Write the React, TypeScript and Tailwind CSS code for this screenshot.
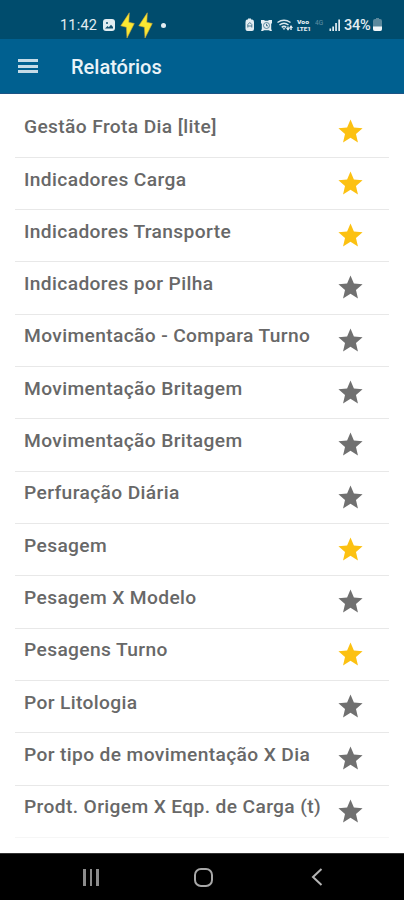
interface Report {
  label: string;
  favorite: boolean;
}

const Reports: Report[] = [
  { label: "Gestão Frota Dia [lite]", favorite: true },
  { label: "Indicadores Carga", favorite: true },
  { label: "Indicadores Transporte", favorite: true },
  { label: "Indicadores por Pilha", favorite: false },
  { label: "Movimentacão - Compara Turno", favorite: false },
  { label: "Movimentação Britagem", favorite: false },
  { label: "Movimentação Britagem", favorite: false },
  { label: "Perfuração Diária", favorite: false },
  { label: "Pesagem", favorite: true },
  { label: "Pesagem X Modelo", favorite: false },
  { label: "Pesagens Turno", favorite: true },
  { label: "Por Litologia", favorite: false },
  { label: "Por tipo de movimentação X Dia", favorite: false },
  { label: "Prodt. Origem X Eqp. de Carga (t)", favorite: false },
];

function Bolt() {
  return (
    <svg width="15" height="27" viewBox="0 0 15 27" className="shrink-0">
      <path d="M9.300.8.8 13.800l5.600 1.400L7 26l7.300-14.500-5.500-1.200z" fill="#fbe832" stroke="#c9a63a" strokeWidth=".6" />
    </svg>
  );
}

function StatusIcons() {
  return (
    <svg width="96" height="14" viewBox="0 0 96 14" fill="#e3edf2">
      {/* battery saver */}
      <path d="M3 .5h3v1h1.200Q9 1.500 9 4v7q0 2-2 2H2.500Q.5 13 .5 11V4Q.5 1.500 2 1.500h1z" />
      <path d="M2.800 9.500V6.500l2-2 2 2v3M3 8h3.600" fill="none" stroke="#3d7189" strokeWidth=".9" />
      {/* alarm */}
      <path d="M16 2h3l1 .8h3L24 2h3v3l-.8 1v5l.8 2h-2l-1-.8h-5l-1 .8h-2l.8-2V6L16 5z" />
      <circle cx="21.500" cy="7.500" r="3" fill="none" stroke="#3d7189" strokeWidth=".8" />
      <path d="M21.500 5.800v2h1.500" fill="none" stroke="#155270" strokeWidth=".8" />
      {/* wifi */}
      <g fill="none" stroke="#dbe8ee" strokeWidth="1.500">
        <path d="M32.500 4.500q6.500-4.500 13 0M34.500 7q4.500-3.500 9 0M36.700 9.400q2.300-2 4.600 0" />
        <path d="M43 11.500V8.500M46 8.500v3.500" />
      </g>
      <path d="m41 10 2 2.800 2-2.800zM44 10l2-3 2 3zM37.500 10.200h3L39 12z" />
      <text x="52" y="6.200" fontSize="5.500" fontWeight="900" fontFamily="Roboto, sans-serif" textLength="12" lengthAdjust="spacingAndGlyphs">Voo</text>
      <text x="52" y="13" fontSize="5.500" fontWeight="900" fontFamily="Roboto, sans-serif" textLength="14" lengthAdjust="spacingAndGlyphs">LTE1</text>
      <text x="70" y="6.800" fontSize="6.500" opacity=".4" fontFamily="Roboto, sans-serif">4G</text>
      <path d="M84.500 10.500h1.600V13h-1.600zM87.300 8.500h1.700V13h-1.700zM90.200 5h1.700v8h-1.700zM93.300 1.500H95V13h-1.700z" />
    </svg>
  );
}

function StatusBar() {
  return (
    <div className="flex h-[39px] items-start bg-[#004c6d] pl-[60px] text-[14.500px] text-[#e3edf2]">
      <span className="mt-[16px] w-[43px] leading-5 tracking-[0.200px]">11:42</span>
      <svg width="12" height="12" viewBox="0 0 12 12" className="mt-[19px]">
        <rect width="12" height="12" rx="3" fill="#e3edf2" />
        <path d="M2 9.500 4.500 7l1.300 1.200L8 5.700l2 2.300v1.500z" fill="#155270" />
        <circle cx="4" cy="4" r="1" fill="#155270" />
      </svg>
      <div className="mt-[12px] ml-[5px] flex gap-[3px]">
        <Bolt />
        <Bolt />
      </div>
      <span className="mt-[23px] ml-[8px] size-[5px] rounded-full bg-[#e3edf2]" />
      <div className="mt-[18px] ml-[79px]">
        <StatusIcons />
      </div>
      <span className="mt-[16px] ml-[3px] w-[28px] leading-5 font-medium tracking-[-0.200px]">34%</span>
      <svg width="9" height="14" viewBox="0 0 9 14" className="mt-[18px] ml-px">
        <path d="M3 0h3v1h1q2 0 2 2v8q0 2-2 2H2q-2 0-2-2V3q0-2 2-2h1z" fill="#5c899d" />
        <path d="M0 8.500h9V11q0 2-2 2H2q-2 0-2-2z" fill="#f2f7f9" />
      </svg>
    </div>
  );
}

function AppBar() {
  return (
    <header className="flex h-[55px] items-center border-b border-[#1c5485] bg-[#006090] pl-[18px]">
      <div className="flex w-[53px] flex-col gap-[2.500px]">
        <span className="h-[3px] w-5 bg-[#c5dbe7]" />
        <span className="h-[3px] w-5 bg-[#c5dbe7]" />
        <span className="h-[3px] w-5 bg-[#c5dbe7]" />
      </div>
      <h1 className="pt-px text-[20px] font-medium text-[#eaf3f8]">Relatórios</h1>
    </header>
  );
}

function ReportRow({ label, favorite }: Report) {
  return (
    <li className="flex h-[52.320px] items-start justify-between border-b border-[#e8e8e8] pr-[24.500px] pl-[9px] last:border-[#f6f6f6]">
      <span className="mt-[7.700px] text-[19.200px] leading-7 font-medium tracking-[0.370px] whitespace-nowrap text-[#686868]">{label}</span>
      <svg width="29" height="29" viewBox="0 0 24 24" className={favorite ? "mt-[11px] shrink-0 fill-[#fcc112]" : "mt-[11px] shrink-0 fill-[#707070]"}>
        <path d="M12 17.270 18.180 21l-1.640-7.030L22 9.240l-7.190-.61L12 2 9.190 8.630 2 9.240l5.460 4.730L5.820 21z" />
      </svg>
    </li>
  );
}

function NavBar() {
  return (
    <nav className="flex h-[47px] items-center border-t border-[#333] bg-black">
      <div className="ml-[83px] flex gap-1">
        <span className="h-[17px] w-[2.500px] bg-[#8c8c8c]" />
        <span className="h-[17px] w-[2.500px] bg-[#8c8c8c]" />
        <span className="h-[17px] w-[2.500px] bg-[#8c8c8c]" />
      </div>
      <span className="ml-[95.500px] size-[19px] rounded-[7px] border-2 border-[#a8a8a8]" />
      <svg width="12" height="18" viewBox="0 0 12 18" className="ml-[98px]">
        <path d="M10.500 1 2 9l8.500 8" fill="none" stroke="#b4b4b4" strokeWidth="2" />
      </svg>
    </nav>
  );
}

export default function App() {
  return (
    <div className="flex h-[900px] w-[404px] flex-col overflow-hidden bg-white font-[Roboto,sans-serif]">
      <StatusBar />
      <AppBar />
      <ul className="mx-[15px] flex-1 pt-[11.500px]">
        {Reports.map((r, i) => (
          <ReportRow key={i} {...r} />
        ))}
      </ul>
      <NavBar />
    </div>
  );
}
